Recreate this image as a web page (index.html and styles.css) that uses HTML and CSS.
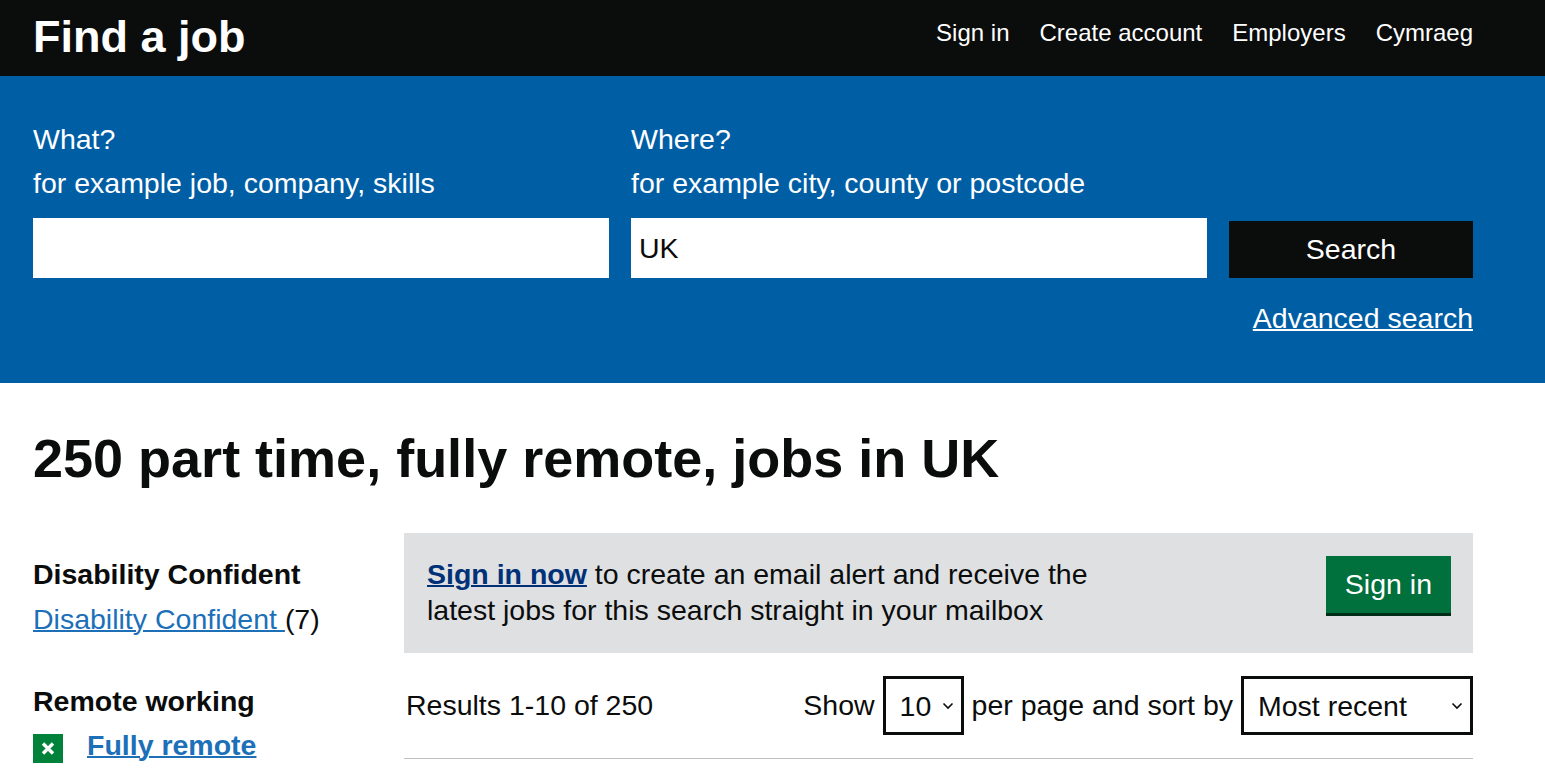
FILE: index.html
```html
<!DOCTYPE html>
<html lang="en">
	<head>
		<meta charset="utf-8">
		<title>Find a job</title>
		<link rel="stylesheet" href="styles.css">
	</head>
	<body>
		<header class="site-header">
			<div class="wrap header-inner">
				<a class="site-title" href="#">Find a job</a>
				<nav class="site-nav">
					<a href="#">Sign in</a>
					<a href="#">Create account</a>
					<a href="#">Employers</a>
					<a href="#">Cymraeg</a>
				</nav>
			</div>
		</header>

		<section class="search-band">
			<form class="wrap search-form">
				<div class="field">
					<label for="what">What?</label>
					<span class="hint">for example job, company, skills</span>
					<input type="text" id="what">
				</div>
				<div class="field">
					<label for="where">Where?</label>
					<span class="hint">for example city, county or postcode</span>
					<input type="text" id="where" value="UK">
				</div>
				<div class="field">
					<button type="button" class="search-button">Search</button>
				</div>
				<a class="advanced-link" href="#">Advanced search</a>
			</form>
		</section>

		<main class="wrap">
			<h1 class="page-title">250 part time, fully remote, jobs in UK</h1>

			<div class="results-layout">
				<aside class="filters">
					<div class="filter-group">
						<h3 class="filter-title">Disability Confident</h3>
						<p class="filter-item"><a class="filter-link" href="#">Disability Confident </a>(7)</p>
					</div>
					<div class="filter-group">
						<h3 class="filter-title">Remote working</h3>
						<p class="filter-item selected">
							<span class="remove-box">
								<svg width="14" height="13" viewBox="0 0 14 13"><path d="M2 1.5 L12 11.5 M12 1.5 L2 11.5" stroke="#fff" stroke-width="3.4" fill="none"/></svg>
							</span>
							<a class="filter-link strong" href="#">Fully remote</a>
						</p>
					</div>
				</aside>

				<div class="results">
					<div class="alert-panel">
						<p class="alert-text"><a class="alert-link" href="#">Sign in now</a> to create an email alert and receive the latest jobs for this search straight in your mailbox</p>
						<button type="button" class="green-button">Sign in</button>
					</div>

					<div class="results-bar">
						<span class="results-count">Results 1-10 of 250</span>
						<div class="sort-controls">
							<span>Show</span>
							<select class="select per-page">
								<option>10</option>
								<option>25</option>
								<option>50</option>
							</select>
							<span>per page and sort by</span>
							<select class="select sort-by">
								<option>Most recent</option>
								<option>Closing date</option>
							</select>
						</div>
					</div>
				</div>
			</div>
		</main>
	</body>
</html>
```

FILE: styles.css
```css
*{
	box-sizing: border-box;
}
body{
	margin: 0;
	font-family: "Liberation Sans", Arial, sans-serif;
	color: #0b0c0c;
	background: #fff;
}
.wrap{
	width: 1440px;
	margin-left: 33px;
}

/* header */
.site-header{
	background: #0b0c0c;
	height: 76px;
}
.header-inner{
	display: flex;
	justify-content: space-between;
	align-items: flex-start;
}
.site-title{
	margin-top: 12px;
	font-size: 45px;
	line-height: 50px;
	font-weight: bold;
	color: #fff;
	text-decoration: none;
}
.site-nav{
	display: flex;
	gap: 30px;
	margin-top: 18px;
}
.site-nav a{
	font-size: 24px;
	line-height: 30px;
	color: #fff;
	text-decoration: none;
}

/* search */
.search-band{
	background: #005ea5;
	color: #fff;
	padding: 46px 0 47px;
}
.search-form{
	display: grid;
	grid-template-columns: 576px 576px 1fr;
	column-gap: 22px;
	align-items: end;
}
.field label,
.field .hint{
	display: block;
	font-size: 28.5px;
	line-height: 35px;
}
.field label{
	margin-bottom: 9px;
}
.field .hint{
	margin-bottom: 17px;
}
.field input{
	display: block;
	width: 100%;
	height: 60px;
	border: 0;
	padding: 0 8px;
	font-family: "Liberation Sans", Arial, sans-serif;
	font-size: 28.5px;
	color: #0b0c0c;
	background: #fff;
}
.search-button{
	display: block;
	width: 100%;
	height: 57px;
	border: 0;
	background: #0b0c0c;
	color: #fff;
	font-family: "Liberation Sans", Arial, sans-serif;
	font-size: 28.5px;
	cursor: pointer;
}
.advanced-link{
	grid-column: 1 / -1;
	justify-self: end;
	margin-top: 23px;
	font-size: 28.5px;
	line-height: 35px;
	color: #fff;
	text-decoration: underline;
	text-decoration-thickness: 2px;
}

/* results */
.page-title{
	margin: 46px 0 45px;
	font-size: 54px;
	line-height: 59px;
	font-weight: bold;
}
.results-layout{
	display: grid;
	grid-template-columns: 341px 1fr;
	column-gap: 30px;
}
.filters{
	padding-top: 24px;
}
.filter-group + .filter-group{
	margin-top: 47px;
}
.filter-title{
	margin: 0;
	font-size: 28.5px;
	line-height: 35px;
	font-weight: bold;
}
.filter-item{
	margin: 10px 0 0;
	font-size: 28.5px;
	line-height: 35px;
}
.filter-item.selected{
	display: flex;
	align-items: flex-start;
	gap: 24px;
	margin-top: 9px;
}
.filter-link{
	color: #1d70b8;
	text-decoration: underline;
	text-decoration-thickness: 2px;
}
.filter-link.strong{
	font-weight: bold;
}
.remove-box{
	display: flex;
	align-items: center;
	justify-content: center;
	width: 30px;
	height: 29px;
	margin-top: 6px;
	background: #00823b;
}

.alert-panel{
	display: flex;
	justify-content: space-between;
	align-items: flex-start;
	background: #dee0e2;
	padding: 23px 22px 25px 23px;
}
.alert-text{
	width: 700px;
	margin: 0;
	font-size: 28.5px;
	line-height: 36px;
}
.alert-link{
	color: #003078;
	font-weight: bold;
	text-decoration: underline;
	text-decoration-thickness: 2px;
}
.green-button{
	height: 57px;
	padding: 0 19px;
	border: 0;
	background: #00703c;
	box-shadow: 0 3px 0 #002d18;
	color: #fff;
	font-family: "Liberation Sans", Arial, sans-serif;
	font-size: 28.5px;
	cursor: pointer;
}

.results-bar{
	display: flex;
	justify-content: space-between;
	align-items: center;
	margin-top: 23px;
	padding-bottom: 23px;
	border-bottom: 1px solid #bfc1c3;
	font-size: 28.5px;
	line-height: 35px;
}
.results-count{
	padding-left: 2px;
}
.sort-controls{
	display: flex;
	align-items: center;
	gap: 8px;
}
.select{
	-webkit-appearance: none;
	appearance: none;
	height: 59px;
	border: 3px solid #0b0c0c;
	border-radius: 0;
	padding: 0 20px 0 14px;
	font-family: "Liberation Sans", Arial, sans-serif;
	font-size: 28.5px;
	color: #0b0c0c;
	background-color: #fff;
	background-image: url("data:image/svg+xml,%3Csvg xmlns='http://www.w3.org/2000/svg' width='12' height='8' viewBox='0 0 12 8'%3E%3Cpath d='M1.5 1.5 L6 6 L10.5 1.5' stroke='%230b0c0c' stroke-width='1.6' fill='none'/%3E%3C/svg%3E");
	background-repeat: no-repeat;
	background-position: right 7px center;
	background-size: 12px 8px;
}
.per-page{
	width: 81px;
}
.sort-by{
	width: 232px;
}
```
